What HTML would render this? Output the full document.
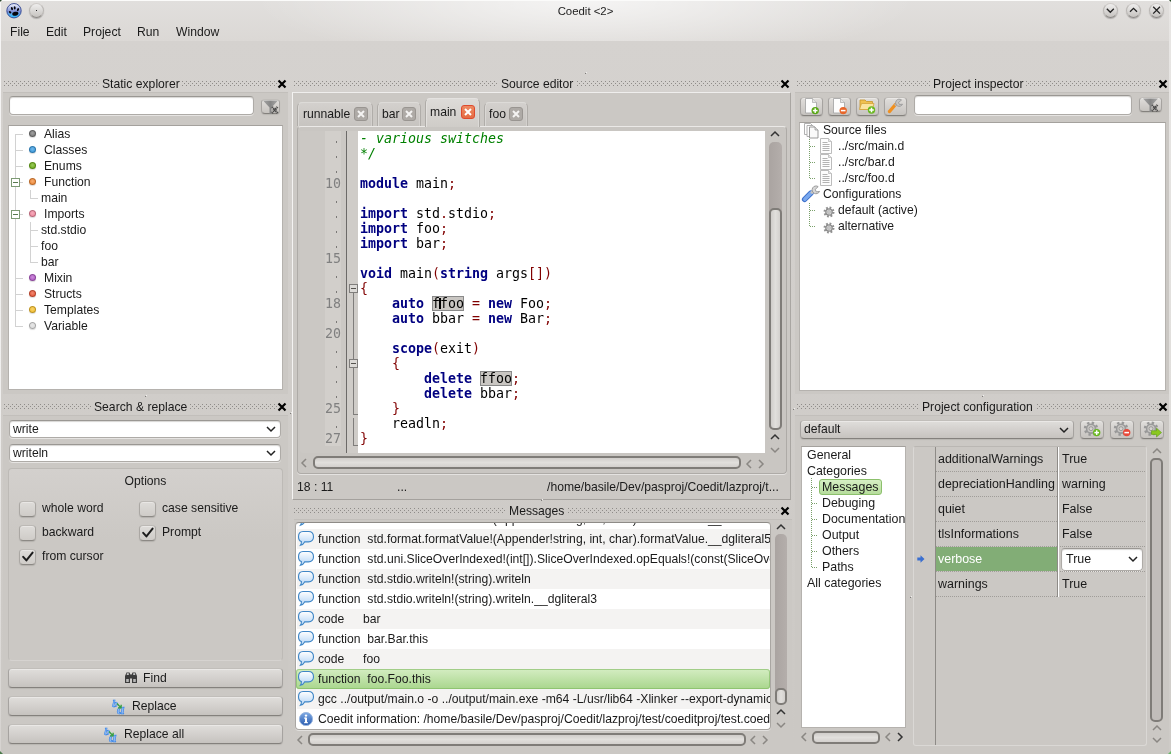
<!DOCTYPE html>
<html lang="en">
<head>
<meta charset="utf-8">
<title>Coedit</title>
<style>
*{box-sizing:border-box;margin:0;padding:0}
html,body{width:1171px;height:754px;overflow:hidden}
body{position:relative;background:linear-gradient(#d5d2cf 40px,#cbc8c4 740px);font-family:"Liberation Sans",Arial,sans-serif;font-size:12.16px;color:#1a1a1a;line-height:16px}
#wrap{position:absolute;left:0;top:0;width:1171px;height:754px;will-change:transform}
.abs{position:absolute}
.t{position:absolute;white-space:nowrap;line-height:16px;height:16px}
#top{left:0;top:0;width:1171px;height:41px;background:radial-gradient(ellipse 330px 64px at 585px 0,rgba(255,255,255,.66),rgba(255,255,255,0)),linear-gradient(#e1dfdd,#dbd8d5);border-top:1px solid #fbfbfa}
.wbtn{position:absolute;width:15px;height:15px;border-radius:50%;background:linear-gradient(#efeeed,#c6c3c0);border:1px solid #bab7b4;border-top-color:#cfccc9;border-bottom-color:#8c8986;box-shadow:0 1px 1px rgba(0,0,0,.22)}
.hdr{position:absolute;height:16px}
.dots{position:absolute;height:5px;
 background:linear-gradient(90deg,#8f8c89 1px,transparent 1px) 0 0/4px 1px repeat-x,linear-gradient(90deg,#8f8c89 1px,transparent 1px) 2px 2px/4px 1px repeat-x,linear-gradient(90deg,#8f8c89 1px,transparent 1px) 0 4px/4px 1px repeat-x}
.panel{position:absolute;background:#cbc8c4;border-top:1px solid #c2bfbb}
.white{position:absolute;background:#fff;border:1px solid #b5b2ae;border-top-color:#a4a19d}
.edit{position:absolute;background:#fff;border:1px solid #aeaba7;border-top-color:#9a9793;border-radius:4px;box-shadow:0 1px 0 #e6e4e2, inset 0 1px 1px #d8d6d4}
.btn{position:absolute;border:1px solid #a6a3a0;border-top-color:#c1beba;border-bottom-color:#84817d;border-radius:4px;background:linear-gradient(#e0dedb,#d3d0cd 50%,#c6c3bf);box-shadow:0 1px 1px #b9b6b2, inset 0 1px 0 #eae8e6}
.tl{position:absolute;background:#d2d2d2}
.dot{position:absolute;width:7px;height:7px;border-radius:50%}
.exp{position:absolute;width:9px;height:9px;border:1px solid #7d9a74;background:#fff}
.exp:after{content:"";position:absolute;left:1px;top:3px;width:5px;height:1px;background:#587a50}
.cb{position:absolute;width:17px;height:16px;border:1px solid #aaa7a3;border-top-color:#bcb9b5;border-bottom-color:#8c8985;border-radius:4px;background:linear-gradient(#dedcd9,#cfccc8);box-shadow:0 1px 1px #b4b1ad, inset 0 1px 0 #e9e7e5}
.sb{position:absolute;border:2px solid #7f7c78;border-radius:5px;background:linear-gradient(90deg,#d0cdca,#e1dfdc 50%,#d3d0cd)}
.sbh{position:absolute;border:2px solid #7f7c78;border-radius:5px;background:linear-gradient(#d0cdca,#e1dfdc 50%,#d3d0cd)}
.trk{position:absolute;background:linear-gradient(90deg,#aaa4a1,#b4aeab);border-radius:5px}
.cl{position:absolute;left:360px;white-space:pre;line-height:15px;height:15px;font-family:"DejaVu Sans Mono","Liberation Mono",monospace;font-size:13.29px;color:#000}
.kw{color:#000080;font-weight:bold}
.sy{color:#800000}
.cm{color:#008000;font-style:italic}
.ln{position:absolute;left:299px;width:42px;text-align:right;line-height:15px;height:15px;font-family:"DejaVu Sans Mono","Liberation Mono",monospace;font-size:13.29px;color:#808080}
.hl{background:#c9c6c2;box-shadow:inset 0 0 0 1px #8a8a8a}
.msg{position:absolute;left:297px;width:473px;height:20px;line-height:20px;white-space:pre;overflow:hidden}
.msg.alt{background:#f4f3f2}
.msg .tx{position:absolute;left:21px;top:0}
.gl{position:absolute}
</style>
</head>
<body>
<div id="wrap">
<div id="top" class="abs"></div>
<div class="abs" style="left:0;top:0;width:1px;height:754px;background:linear-gradient(#f6f5f5,#efeeed 400px,#d6d3d0 740px)"></div>
<div class="abs" style="left:0;top:0;width:0;height:0;border-top:2px solid #2c4a2c;border-right:2px solid transparent"></div>
<div class="abs" style="left:1169px;top:0;width:2px;height:754px;background:linear-gradient(#e8e6e4,#e0dedb 400px,#cecbc7 740px)"></div>
<div class="abs" style="left:0;bottom:0;width:0;height:0;border-bottom:3px solid #4a7a4a;border-right:3px solid transparent"></div>
<div class="abs" style="right:0;bottom:0;width:0;height:0;border-bottom:3px solid #6ab86a;border-left:3px solid transparent"></div>
<div class="abs" style="right:0;top:0;width:0;height:0;border-top:2px solid #2c4a2c;border-left:2px solid transparent"></div>
<svg class="abs" style="left:6px;top:3px" width="16" height="16" viewBox="0 0 18 18">
 <defs><linearGradient id="pawg" x1="0" y1="0" x2="0" y2="1"><stop offset="0" stop-color="#f6f8fd"/><stop offset="0.22" stop-color="#c4cdee"/><stop offset="0.55" stop-color="#7f90d6"/><stop offset="0.85" stop-color="#3fb4f6"/><stop offset="1" stop-color="#35c0ff"/></linearGradient></defs>
 <circle cx="9" cy="8.7" r="8.1" fill="url(#pawg)" stroke="#2e418e" stroke-width="1"/>
 <ellipse cx="10.5" cy="12.1" rx="3.5" ry="2.2" transform="rotate(-14 10.5 12.1)" fill="#06060c"/>
 <ellipse cx="4.6" cy="10.3" rx="1.1" ry="1.6" transform="rotate(-50 4.6 10.3)" fill="#06060c"/>
 <ellipse cx="6.7" cy="6.3" rx="1.1" ry="1.8" transform="rotate(-20 6.7 6.3)" fill="#06060c"/>
 <ellipse cx="9.8" cy="5.4" rx="1.1" ry="1.8" transform="rotate(-5 9.8 5.4)" fill="#06060c"/>
 <ellipse cx="13.5" cy="7.5" rx="1.1" ry="1.8" transform="rotate(25 13.5 7.5)" fill="#06060c"/>
</svg>
<div class="wbtn" style="left:29px;top:3px"></div>
<div class="abs" style="left:36px;top:10px;width:1px;height:1px;background:#222"></div>
<div class="t" style="left:0;width:1171px;top:2.5px;text-align:center;color:#222;font-size:11.4px">Coedit &lt;2&gt;</div>
<div class="wbtn" style="left:1103px;top:3px"></div>
<div class="wbtn" style="left:1126px;top:3px"></div>
<div class="wbtn" style="left:1149px;top:3px"></div>
<svg class="abs" style="left:1102px;top:2px" width="64" height="18" viewBox="0 0 64 18" fill="none" stroke="#222" stroke-width="1.3" stroke-linecap="butt" stroke-linejoin="miter">
 <path d="M4.8 6.8 L8.3 10.3 L11.8 6.8"/><path d="M28 9.8 L31.5 6.3 L35 9.8"/><path d="M51.2 4.8 L58 11.6 M58 4.8 L51.2 11.6"/>
</svg>
<div class="t" style="left:10px;top:24px;">File</div>
<div class="t" style="left:46px;top:24px;">Edit</div>
<div class="t" style="left:83px;top:24px;">Project</div>
<div class="t" style="left:137px;top:24px;">Run</div>
<div class="t" style="left:176px;top:24px;">Window</div>
<div class="dots" style="left:4px;top:81px;width:95px"></div>
<div class="t" style="left:102px;top:76px;">Static explorer</div>
<div class="dots" style="left:182px;top:81px;width:95px"></div>
<svg class="abs" style="left:277px;top:79px" width="10" height="10" viewBox="0 0 10 10"><path d="M1.5 1.5 L8.5 8.5 M8.5 1.5 L1.5 8.5" stroke="#000" stroke-width="2.2" stroke-linecap="butt"/></svg>
<div class="panel" style="left:3px;top:92px;width:285px;height:302px"></div>
<div class="edit" style="left:9px;top:96px;width:245px;height:19px"></div>
<div class="btn" style="left:261px;top:99px;width:19px;height:15px;border-radius:4px"></div>
<svg class="abs" style="left:261px;top:99px" width="19" height="16" viewBox="0 0 19 16"><defs><linearGradient id="fg261" x1="0" y1="0" x2="1" y2="0"><stop offset="0" stop-color="#a4a4a4"/><stop offset="0.5" stop-color="#868686"/><stop offset="1" stop-color="#a8a8a8"/></linearGradient></defs><path d="M2.0 1.5 H17.0 L10.5 8.5 V15 H8.5 V8.5 Z" fill="url(#fg261)"/><path d="M11.0 8 L16.5 14 M16.5 8 L11.0 14" stroke="#444" stroke-width="2.2" stroke-dasharray="1.1 0.7"/></svg>
<div class="white" style="left:8px;top:125px;width:275px;height:265px"></div>
<div class="tl" style="left:15px;top:134px;width:1px;height:193px"></div>
<div class="tl" style="left:16px;top:134px;width:7px;height:1px"></div>
<div class="dot" style="left:29px;top:130px;background:radial-gradient(circle at 50% 45%,rgba(255,255,255,.3),rgba(255,255,255,0) 60%),#7a7a7a;box-shadow:inset 0 0 0 1px rgba(0,0,0,.25),0 1px 1px rgba(0,0,0,.15)"></div>
<div class="t" style="left:44px;top:126px;">Alias</div>
<div class="tl" style="left:16px;top:150px;width:7px;height:1px"></div>
<div class="dot" style="left:29px;top:146px;background:radial-gradient(circle at 50% 45%,rgba(255,255,255,.3),rgba(255,255,255,0) 60%),#3a9ade;box-shadow:inset 0 0 0 1px rgba(0,0,0,.25),0 1px 1px rgba(0,0,0,.15)"></div>
<div class="t" style="left:44px;top:142px;">Classes</div>
<div class="tl" style="left:16px;top:166px;width:7px;height:1px"></div>
<div class="dot" style="left:29px;top:162px;background:radial-gradient(circle at 50% 45%,rgba(255,255,255,.3),rgba(255,255,255,0) 60%),#6fb01c;box-shadow:inset 0 0 0 1px rgba(0,0,0,.25),0 1px 1px rgba(0,0,0,.15)"></div>
<div class="t" style="left:44px;top:158px;">Enums</div>
<div class="tl" style="left:16px;top:182px;width:7px;height:1px"></div>
<div class="dot" style="left:29px;top:178px;background:radial-gradient(circle at 50% 45%,rgba(255,255,255,.3),rgba(255,255,255,0) 60%),#f08a38;box-shadow:inset 0 0 0 1px rgba(0,0,0,.25),0 1px 1px rgba(0,0,0,.15)"></div>
<div class="t" style="left:44px;top:174px;">Function</div>
<div class="exp" style="left:11px;top:178px"></div>
<div class="t" style="left:41px;top:190px;">main</div>
<div class="tl" style="left:16px;top:214px;width:7px;height:1px"></div>
<div class="dot" style="left:29px;top:210px;background:radial-gradient(circle at 50% 45%,rgba(255,255,255,.3),rgba(255,255,255,0) 60%),#f08aa0;box-shadow:inset 0 0 0 1px rgba(0,0,0,.25),0 1px 1px rgba(0,0,0,.15)"></div>
<div class="t" style="left:44px;top:206px;">Imports</div>
<div class="exp" style="left:11px;top:210px"></div>
<div class="t" style="left:41px;top:222px;">std.stdio</div>
<div class="t" style="left:41px;top:238px;">foo</div>
<div class="t" style="left:41px;top:254px;">bar</div>
<div class="tl" style="left:16px;top:278px;width:7px;height:1px"></div>
<div class="dot" style="left:29px;top:274px;background:radial-gradient(circle at 50% 45%,rgba(255,255,255,.3),rgba(255,255,255,0) 60%),#b45cc8;box-shadow:inset 0 0 0 1px rgba(0,0,0,.25),0 1px 1px rgba(0,0,0,.15)"></div>
<div class="t" style="left:44px;top:270px;">Mixin</div>
<div class="tl" style="left:16px;top:294px;width:7px;height:1px"></div>
<div class="dot" style="left:29px;top:290px;background:radial-gradient(circle at 50% 45%,rgba(255,255,255,.3),rgba(255,255,255,0) 60%),#e8583a;box-shadow:inset 0 0 0 1px rgba(0,0,0,.25),0 1px 1px rgba(0,0,0,.15)"></div>
<div class="t" style="left:44px;top:286px;">Structs</div>
<div class="tl" style="left:16px;top:310px;width:7px;height:1px"></div>
<div class="dot" style="left:29px;top:306px;background:radial-gradient(circle at 50% 45%,rgba(255,255,255,.3),rgba(255,255,255,0) 60%),#f5c030;box-shadow:inset 0 0 0 1px rgba(0,0,0,.25),0 1px 1px rgba(0,0,0,.15)"></div>
<div class="t" style="left:44px;top:302px;">Templates</div>
<div class="tl" style="left:16px;top:326px;width:7px;height:1px"></div>
<div class="dot" style="left:29px;top:322px;background:radial-gradient(circle at 50% 45%,rgba(255,255,255,.3),rgba(255,255,255,0) 60%),#dcdcdc;box-shadow:inset 0 0 0 1px rgba(0,0,0,.25),0 1px 1px rgba(0,0,0,.15)"></div>
<div class="t" style="left:44px;top:318px;">Variable</div>
<div class="tl" style="left:30px;top:190px;width:1px;height:9px"></div><div class="tl" style="left:30px;top:198px;width:8px;height:1px"></div>
<div class="tl" style="left:30px;top:222px;width:1px;height:41px"></div>
<div class="tl" style="left:30px;top:230px;width:8px;height:1px"></div>
<div class="tl" style="left:30px;top:246px;width:8px;height:1px"></div>
<div class="tl" style="left:30px;top:262px;width:8px;height:1px"></div>
<div class="dots" style="left:4px;top:404px;width:87px"></div>
<div class="t" style="left:94px;top:399px;">Search &amp; replace</div>
<div class="dots" style="left:190px;top:404px;width:87px"></div>
<svg class="abs" style="left:277px;top:402px" width="10" height="10" viewBox="0 0 10 10"><path d="M1.5 1.5 L8.5 8.5 M8.5 1.5 L1.5 8.5" stroke="#000" stroke-width="2.2" stroke-linecap="butt"/></svg>
<div class="panel" style="left:3px;top:415px;width:285px;height:336px"></div>
<div class="edit" style="left:9px;top:420px;width:272px;height:18px"></div>
<div class="t" style="left:13px;top:421px;">write</div>
<svg class="abs" style="left:266px;top:426px" width="10" height="7" viewBox="0 0 10 7"><path d="M1 1 L5 5 L9 1" fill="none" stroke="#222" stroke-width="1.5"/></svg>
<div class="edit" style="left:9px;top:444px;width:272px;height:18px"></div>
<div class="t" style="left:13px;top:445px;">writeln</div>
<svg class="abs" style="left:266px;top:450px" width="10" height="7" viewBox="0 0 10 7"><path d="M1 1 L5 5 L9 1" fill="none" stroke="#222" stroke-width="1.5"/></svg>
<div class="abs" style="left:8px;top:468px;width:275px;height:193px;border:1px solid #bdbab6;border-bottom-color:#d6d3d0;border-radius:4px;background:linear-gradient(#d3d0cd,#cbc8c4 70px)"></div>
<div class="t" style="left:8px;top:473px;width:275px;text-align:center">Options</div>
<div class="cb" style="left:19px;top:501px"></div>
<div class="t" style="left:42px;top:500px;">whole word</div>
<div class="cb" style="left:139px;top:501px"></div>
<div class="t" style="left:162px;top:500px;">case sensitive</div>
<div class="cb" style="left:19px;top:525px"></div>
<div class="t" style="left:42px;top:524px;">backward</div>
<div class="cb" style="left:139px;top:525px"></div>
<svg class="abs" style="left:141px;top:526px" width="14" height="14" viewBox="0 0 14 14"><path d="M2.2 6.8 L5.4 10.4 L11.6 2.6" fill="none" stroke="#1c1c1c" stroke-width="2" stroke-linecap="round" stroke-linejoin="round"/></svg>
<div class="t" style="left:162px;top:524px;">Prompt</div>
<div class="cb" style="left:19px;top:549px"></div>
<svg class="abs" style="left:21px;top:550px" width="14" height="14" viewBox="0 0 14 14"><path d="M2.2 6.8 L5.4 10.4 L11.6 2.6" fill="none" stroke="#1c1c1c" stroke-width="2" stroke-linecap="round" stroke-linejoin="round"/></svg>
<div class="t" style="left:42px;top:548px;">from cursor</div>
<div class="btn" style="left:8px;top:668px;width:275px;height:20px"></div>
<div class="t" style="left:143px;top:670px;">Find</div>
<div class="btn" style="left:8px;top:696px;width:275px;height:20px"></div>
<div class="t" style="left:132px;top:698px;">Replace</div>
<div class="btn" style="left:8px;top:724px;width:275px;height:20px"></div>
<div class="t" style="left:124px;top:726px;">Replace all</div>
<svg class="abs" style="left:124px;top:671px" width="14" height="13" viewBox="0 0 14 13"><path d="M1 5 l1.5-3.5 h3 l0.8 2 h1.4 l0.8-2 h3 L13 5 V12 H8 V7.5 H6 V12 H1 Z" fill="#3c3c3c"/><rect x="2.2" y="8" width="2.6" height="3" fill="#b8b8b8"/><rect x="9.2" y="8" width="2.6" height="3" fill="#b8b8b8"/><rect x="2.8" y="2.3" width="2" height="1.6" fill="#d8d8d8"/><rect x="9.2" y="2.3" width="2" height="1.6" fill="#d8d8d8"/></svg>
<svg class="abs" style="left:112px;top:698px" width="17" height="17" viewBox="0 0 17 17"><text x="0.3" y="8.5" style="font:italic bold 11px Liberation Serif,serif" fill="#8fbcf6" stroke="#2f7fe8" stroke-width="0.5">b</text><text x="5" y="16" style="font:italic bold 15px Liberation Serif,serif" fill="#8fbcf6" stroke="#2f7fe8" stroke-width="0.6">a</text><path d="M5 5.5 L8.6 9.4 M9.2 6.8 L9 9.8 L6 9.9" fill="none" stroke="#3aa040" stroke-width="1.4"/></svg>
<svg class="abs" style="left:104px;top:726px" width="17" height="17" viewBox="0 0 17 17"><text x="0.3" y="8.5" style="font:italic bold 11px Liberation Serif,serif" fill="#8fbcf6" stroke="#2f7fe8" stroke-width="0.5">b</text><text x="5" y="16" style="font:italic bold 15px Liberation Serif,serif" fill="#8fbcf6" stroke="#2f7fe8" stroke-width="0.6">a</text><path d="M5 5.5 L8.6 9.4 M9.2 6.8 L9 9.8 L6 9.9" fill="none" stroke="#3aa040" stroke-width="1.4"/></svg>
<div class="dots" style="left:294px;top:81px;width:204px"></div>
<div class="t" style="left:501px;top:76px;">Source editor</div>
<div class="dots" style="left:577px;top:81px;width:203px"></div>
<svg class="abs" style="left:780px;top:79px" width="10" height="10" viewBox="0 0 10 10"><path d="M1.5 1.5 L8.5 8.5 M8.5 1.5 L1.5 8.5" stroke="#000" stroke-width="2.2" stroke-linecap="butt"/></svg>
<div class="abs" style="left:292px;top:92px;width:499px;height:408px;background:#cbc8c4;border:1px solid #a9a6a2;border-top-color:#efeeed;border-left-color:#f4f3f2;border-bottom-color:#a4a19d"></div>
<div class="abs" style="left:297px;top:102px;width:76px;height:24px;border:1px solid #b0ada9;border-top-color:#dddbd8;border-bottom:none;border-radius:5px 5px 0 0;background:linear-gradient(#d3d0cd,#c7c4c0);box-shadow:inset 1px 0 0 #dad8d5,inset -1px 0 0 #d4d1ce"></div>
<div class="t" style="left:303px;top:106px;">runnable</div>
<div class="abs" style="left:354px;top:107px;width:14px;height:14px;border-radius:3px;background:#aeaaa6;border:1px solid #999591"></div>
<svg class="abs" style="left:357px;top:110px" width="8" height="8" viewBox="0 0 8 8"><path d="M1 1 L7 7 M7 1 L1 7" stroke="#f4f3f2" stroke-width="2"/></svg>
<div class="abs" style="left:377px;top:102px;width:44px;height:24px;border:1px solid #b0ada9;border-top-color:#dddbd8;border-bottom:none;border-radius:5px 5px 0 0;background:linear-gradient(#d3d0cd,#c7c4c0);box-shadow:inset 1px 0 0 #dad8d5,inset -1px 0 0 #d4d1ce"></div>
<div class="t" style="left:382px;top:106px;">bar</div>
<div class="abs" style="left:402px;top:107px;width:14px;height:14px;border-radius:3px;background:#aeaaa6;border:1px solid #999591"></div>
<svg class="abs" style="left:405px;top:110px" width="8" height="8" viewBox="0 0 8 8"><path d="M1 1 L7 7 M7 1 L1 7" stroke="#f4f3f2" stroke-width="2"/></svg>
<div class="abs" style="left:484px;top:102px;width:44px;height:24px;border:1px solid #b0ada9;border-top-color:#dddbd8;border-bottom:none;border-radius:5px 5px 0 0;background:linear-gradient(#d3d0cd,#c7c4c0);box-shadow:inset 1px 0 0 #dad8d5,inset -1px 0 0 #d4d1ce"></div>
<div class="t" style="left:489px;top:106px;">foo</div>
<div class="abs" style="left:509px;top:107px;width:14px;height:14px;border-radius:3px;background:#aeaaa6;border:1px solid #999591"></div>
<svg class="abs" style="left:512px;top:110px" width="8" height="8" viewBox="0 0 8 8"><path d="M1 1 L7 7 M7 1 L1 7" stroke="#f4f3f2" stroke-width="2"/></svg>
<div class="abs" style="left:297px;top:126px;width:490px;height:348px;border:1px solid #aeaba7;border-top-color:#ebe9e7;border-radius:4px;background:#c9c6c2;box-shadow:0 1px 0 #e4e2e0"></div>
<div class="abs" style="left:425px;top:98px;width:55px;height:29px;border:1px solid #aeaba7;border-top-color:#e4e2e0;border-bottom:none;border-radius:5px 5px 0 0;background:linear-gradient(#dddbd8,#cfccc8);box-shadow:inset 1px 0 0 #e2e0dd,inset -1px 0 0 #dcdad7"></div>
<div class="t" style="left:430px;top:104px;">main</div>
<div class="abs" style="left:461px;top:105px;width:14px;height:14px;border-radius:3px;background:linear-gradient(#ee8a62,#e46c44);border:1px solid #de4a2e"></div>
<svg class="abs" style="left:464px;top:108px" width="8" height="8" viewBox="0 0 8 8"><path d="M1 1 L7 7 M7 1 L1 7" stroke="#fff" stroke-width="2"/></svg>
<div class="abs" style="left:300px;top:131px;width:46px;height:322px;background:#cbc8c4;border-radius:0 0 0 3px"></div>
<div class="abs" style="left:325px;top:131px;width:16px;height:315px;background:#d2cfcb"></div>
<div class="abs" style="left:347px;top:131px;width:11px;height:322px;background:#cfccc8"></div>
<div class="abs" style="left:346px;top:131px;width:1px;height:322px;background:#6c6a68"></div>
<div class="abs" style="left:358px;top:131px;width:407px;height:322px;background:#fff"></div>
<div class="abs" style="left:336px;top:141px;width:1px;height:2px;background:#7a7876"></div>
<div class="cl" style="top:131px"><span class="cm">- various switches</span></div>
<div class="abs" style="left:336px;top:156px;width:1px;height:2px;background:#7a7876"></div>
<div class="cl" style="top:146px"><span class="cm">*/</span></div>
<div class="abs" style="left:336px;top:171px;width:1px;height:2px;background:#7a7876"></div>
<div class="ln" style="top:176px">10</div>
<div class="cl" style="top:176px"><span class="kw">module</span> main<span class="sy">;</span></div>
<div class="abs" style="left:336px;top:201px;width:1px;height:2px;background:#7a7876"></div>
<div class="abs" style="left:336px;top:216px;width:1px;height:2px;background:#7a7876"></div>
<div class="cl" style="top:206px"><span class="kw">import</span> std<span class="sy">.</span>stdio<span class="sy">;</span></div>
<div class="abs" style="left:336px;top:231px;width:1px;height:2px;background:#7a7876"></div>
<div class="cl" style="top:221px"><span class="kw">import</span> foo<span class="sy">;</span></div>
<div class="abs" style="left:336px;top:246px;width:1px;height:2px;background:#7a7876"></div>
<div class="cl" style="top:236px"><span class="kw">import</span> bar<span class="sy">;</span></div>
<div class="ln" style="top:251px">15</div>
<div class="abs" style="left:336px;top:276px;width:1px;height:2px;background:#7a7876"></div>
<div class="cl" style="top:266px"><span class="kw">void</span> main<span class="sy">(</span><span class="kw">string</span> args<span class="sy">[])</span></div>
<div class="abs" style="left:336px;top:291px;width:1px;height:2px;background:#7a7876"></div>
<div class="cl" style="top:281px"><span class="sy">{</span></div>
<div class="ln" style="top:296px">18</div>
<div class="cl" style="top:296px">    <span class="kw">auto</span> <span class="hl">ffoo</span> <span class="sy">=</span> <span class="kw">new</span> Foo<span class="sy">;</span></div>
<div class="abs" style="left:336px;top:321px;width:1px;height:2px;background:#7a7876"></div>
<div class="cl" style="top:311px">    <span class="kw">auto</span> bbar <span class="sy">=</span> <span class="kw">new</span> Bar<span class="sy">;</span></div>
<div class="ln" style="top:326px">20</div>
<div class="abs" style="left:336px;top:351px;width:1px;height:2px;background:#7a7876"></div>
<div class="cl" style="top:341px">    <span class="kw">scope</span><span class="sy">(</span>exit<span class="sy">)</span></div>
<div class="abs" style="left:336px;top:366px;width:1px;height:2px;background:#7a7876"></div>
<div class="cl" style="top:356px">    <span class="sy">{</span></div>
<div class="abs" style="left:336px;top:381px;width:1px;height:2px;background:#7a7876"></div>
<div class="cl" style="top:371px">        <span class="kw">delete</span> <span class="hl">ffoo</span><span class="sy">;</span></div>
<div class="abs" style="left:336px;top:396px;width:1px;height:2px;background:#7a7876"></div>
<div class="cl" style="top:386px">        <span class="kw">delete</span> bbar<span class="sy">;</span></div>
<div class="ln" style="top:401px">25</div>
<div class="cl" style="top:401px">    <span class="sy">}</span></div>
<div class="abs" style="left:336px;top:426px;width:1px;height:2px;background:#7a7876"></div>
<div class="cl" style="top:416px">    readln<span class="sy">;</span></div>
<div class="ln" style="top:431px">27</div>
<div class="cl" style="top:431px"><span class="sy">}</span></div>
<div class="abs" style="left:439px;top:298px;width:2px;height:11px;background:#000"></div>
<div class="abs" style="left:353px;top:293px;width:1px;height:66px;background:#7f7d7b"></div>
<div class="abs" style="left:353px;top:368px;width:1px;height:47px;background:#7f7d7b"></div>
<div class="abs" style="left:353px;top:414px;width:5px;height:1px;background:#7f7d7b"></div>
<div class="abs" style="left:353px;top:418px;width:1px;height:28px;background:#7f7d7b"></div>
<div class="abs" style="left:353px;top:445px;width:5px;height:1px;background:#7f7d7b"></div>
<div class="abs" style="left:349px;top:284px;width:9px;height:9px;border:1px solid #7f7d7b;background:#dcdad7"></div><div class="abs" style="left:351px;top:288px;width:5px;height:1px;background:#55534f"></div>
<div class="abs" style="left:349px;top:359px;width:9px;height:9px;border:1px solid #7f7d7b;background:#dcdad7"></div><div class="abs" style="left:351px;top:363px;width:5px;height:1px;background:#55534f"></div>
<svg class="abs" style="left:770px;top:130px" width="10" height="10" viewBox="0 0 10 10"><path d="M1 6 L5 2 L9 6" fill="none" stroke="#333" stroke-width="1.5"/></svg>
<div class="trk" style="left:769px;top:142px;width:13px;height:288px"></div>
<div class="sb" style="left:769px;top:208px;width:13px;height:222px"></div>
<svg class="abs" style="left:770px;top:433px" width="10" height="10" viewBox="0 0 10 10"><path d="M1 6 L5 2 L9 6" fill="none" stroke="#333" stroke-width="1.5"/></svg>
<svg class="abs" style="left:770px;top:446px" width="10" height="10" viewBox="0 0 10 10"><path d="M1 2 L5 6 L9 2" fill="none" stroke="#8a8783" stroke-width="1.5"/></svg>
<svg class="abs" style="left:300px;top:458px" width="10" height="10" viewBox="0 0 10 10"><path d="M6 1 L2 5 L6 9" fill="none" stroke="#8a8783" stroke-width="1.5"/></svg>
<div class="sbh" style="left:313px;top:456px;width:428px;height:13px"></div>
<svg class="abs" style="left:745px;top:459px" width="10" height="10" viewBox="0 0 10 10"><path d="M6 1 L2 5 L6 9" fill="none" stroke="#8a8783" stroke-width="1.5"/></svg>
<svg class="abs" style="left:757px;top:459px" width="10" height="10" viewBox="0 0 10 10"><path d="M2 1 L6 5 L2 9" fill="none" stroke="#8a8783" stroke-width="1.5"/></svg>
<div class="t" style="left:297px;top:479px;">18 : 11</div>
<div class="t" style="left:397px;top:479px;">...</div>
<div class="t" style="left:547px;top:479px;">/home/basile/Dev/pasproj/Coedit/lazproj/t...</div>
<div class="dots" style="left:294px;top:508px;width:212px"></div>
<div class="t" style="left:509px;top:503px;">Messages</div>
<div class="dots" style="left:568px;top:508px;width:212px"></div>
<svg class="abs" style="left:780px;top:506px" width="10" height="10" viewBox="0 0 10 10"><path d="M1.5 1.5 L8.5 8.5 M8.5 1.5 L1.5 8.5" stroke="#000" stroke-width="2.2" stroke-linecap="butt"/></svg>
<div class="panel" style="left:294px;top:519px;width:498px;height:232px"></div>
<div class="abs" style="left:295px;top:522px;width:476px;height:208px;background:#fff;border:1px solid #a9a6a2;border-top-color:#8e8b87;border-radius:4px;box-shadow:0 1px 0 #e2e0de"></div>
<div class="msg" style="top:523px;height:6px"><div class="abs" style="left:0;top:-14px;width:473px;height:20px"><span class="tx">function  std.format.formatValue!(Appender!string, int, char).formatValue.__lambda</span><svg class="abs" style="left:0px;top:1px" width="18" height="17" viewBox="0 0 18 17"><defs><linearGradient id="bg99" x1="0" y1="0" x2="0" y2="1"><stop offset="0" stop-color="#ffffff"/><stop offset="0.75" stop-color="#c4def8"/></linearGradient></defs><path d="M6 1.5 H11.5 C14.8 1.5 16.5 3.6 16.5 6.7 C16.5 9.8 14.8 11.9 11.5 11.9 H7.6 C6.8 13.6 5.3 14.8 3.4 15.3 C4.2 14.2 4.5 13 4.4 11.6 C2.4 10.9 1.5 9.2 1.5 6.7 C1.5 3.6 3 1.5 6 1.5 Z" fill="url(#bg99)" stroke="#3f86c6" stroke-width="1.1"/></svg></div></div>
<div class="msg alt" style="top:529px;"><svg class="abs" style="left:0px;top:1px" width="18" height="17" viewBox="0 0 18 17"><defs><linearGradient id="bg0" x1="0" y1="0" x2="0" y2="1"><stop offset="0" stop-color="#ffffff"/><stop offset="0.75" stop-color="#c4def8"/></linearGradient></defs><path d="M6 1.5 H11.5 C14.8 1.5 16.5 3.6 16.5 6.7 C16.5 9.8 14.8 11.9 11.5 11.9 H7.6 C6.8 13.6 5.3 14.8 3.4 15.3 C4.2 14.2 4.5 13 4.4 11.6 C2.4 10.9 1.5 9.2 1.5 6.7 C1.5 3.6 3 1.5 6 1.5 Z" fill="url(#bg0)" stroke="#3f86c6" stroke-width="1.1"/></svg><span class="tx">function  std.format.formatValue!(Appender!string, int, char).formatValue.__dgliteral5</span></div>
<div class="msg" style="top:549px;"><svg class="abs" style="left:0px;top:1px" width="18" height="17" viewBox="0 0 18 17"><defs><linearGradient id="bg1" x1="0" y1="0" x2="0" y2="1"><stop offset="0" stop-color="#ffffff"/><stop offset="0.75" stop-color="#c4def8"/></linearGradient></defs><path d="M6 1.5 H11.5 C14.8 1.5 16.5 3.6 16.5 6.7 C16.5 9.8 14.8 11.9 11.5 11.9 H7.6 C6.8 13.6 5.3 14.8 3.4 15.3 C4.2 14.2 4.5 13 4.4 11.6 C2.4 10.9 1.5 9.2 1.5 6.7 C1.5 3.6 3 1.5 6 1.5 Z" fill="url(#bg1)" stroke="#3f86c6" stroke-width="1.1"/></svg><span class="tx">function  std.uni.SliceOverIndexed!(int[]).SliceOverIndexed.opEquals!(const(SliceOverIndexed!(int[])))</span></div>
<div class="msg alt" style="top:569px;"><svg class="abs" style="left:0px;top:1px" width="18" height="17" viewBox="0 0 18 17"><defs><linearGradient id="bg2" x1="0" y1="0" x2="0" y2="1"><stop offset="0" stop-color="#ffffff"/><stop offset="0.75" stop-color="#c4def8"/></linearGradient></defs><path d="M6 1.5 H11.5 C14.8 1.5 16.5 3.6 16.5 6.7 C16.5 9.8 14.8 11.9 11.5 11.9 H7.6 C6.8 13.6 5.3 14.8 3.4 15.3 C4.2 14.2 4.5 13 4.4 11.6 C2.4 10.9 1.5 9.2 1.5 6.7 C1.5 3.6 3 1.5 6 1.5 Z" fill="url(#bg2)" stroke="#3f86c6" stroke-width="1.1"/></svg><span class="tx">function  std.stdio.writeln!(string).writeln</span></div>
<div class="msg" style="top:589px;"><svg class="abs" style="left:0px;top:1px" width="18" height="17" viewBox="0 0 18 17"><defs><linearGradient id="bg3" x1="0" y1="0" x2="0" y2="1"><stop offset="0" stop-color="#ffffff"/><stop offset="0.75" stop-color="#c4def8"/></linearGradient></defs><path d="M6 1.5 H11.5 C14.8 1.5 16.5 3.6 16.5 6.7 C16.5 9.8 14.8 11.9 11.5 11.9 H7.6 C6.8 13.6 5.3 14.8 3.4 15.3 C4.2 14.2 4.5 13 4.4 11.6 C2.4 10.9 1.5 9.2 1.5 6.7 C1.5 3.6 3 1.5 6 1.5 Z" fill="url(#bg3)" stroke="#3f86c6" stroke-width="1.1"/></svg><span class="tx">function  std.stdio.writeln!(string).writeln.__dgliteral3</span></div>
<div class="msg alt" style="top:609px;"><svg class="abs" style="left:0px;top:1px" width="18" height="17" viewBox="0 0 18 17"><defs><linearGradient id="bg4" x1="0" y1="0" x2="0" y2="1"><stop offset="0" stop-color="#ffffff"/><stop offset="0.75" stop-color="#c4def8"/></linearGradient></defs><path d="M6 1.5 H11.5 C14.8 1.5 16.5 3.6 16.5 6.7 C16.5 9.8 14.8 11.9 11.5 11.9 H7.6 C6.8 13.6 5.3 14.8 3.4 15.3 C4.2 14.2 4.5 13 4.4 11.6 C2.4 10.9 1.5 9.2 1.5 6.7 C1.5 3.6 3 1.5 6 1.5 Z" fill="url(#bg4)" stroke="#3f86c6" stroke-width="1.1"/></svg><span class="tx"><span style="display:inline-block;width:45px">code</span>bar</span></div>
<div class="msg" style="top:629px;"><svg class="abs" style="left:0px;top:1px" width="18" height="17" viewBox="0 0 18 17"><defs><linearGradient id="bg5" x1="0" y1="0" x2="0" y2="1"><stop offset="0" stop-color="#ffffff"/><stop offset="0.75" stop-color="#c4def8"/></linearGradient></defs><path d="M6 1.5 H11.5 C14.8 1.5 16.5 3.6 16.5 6.7 C16.5 9.8 14.8 11.9 11.5 11.9 H7.6 C6.8 13.6 5.3 14.8 3.4 15.3 C4.2 14.2 4.5 13 4.4 11.6 C2.4 10.9 1.5 9.2 1.5 6.7 C1.5 3.6 3 1.5 6 1.5 Z" fill="url(#bg5)" stroke="#3f86c6" stroke-width="1.1"/></svg><span class="tx">function  bar.Bar.this</span></div>
<div class="msg alt" style="top:649px;"><svg class="abs" style="left:0px;top:1px" width="18" height="17" viewBox="0 0 18 17"><defs><linearGradient id="bg6" x1="0" y1="0" x2="0" y2="1"><stop offset="0" stop-color="#ffffff"/><stop offset="0.75" stop-color="#c4def8"/></linearGradient></defs><path d="M6 1.5 H11.5 C14.8 1.5 16.5 3.6 16.5 6.7 C16.5 9.8 14.8 11.9 11.5 11.9 H7.6 C6.8 13.6 5.3 14.8 3.4 15.3 C4.2 14.2 4.5 13 4.4 11.6 C2.4 10.9 1.5 9.2 1.5 6.7 C1.5 3.6 3 1.5 6 1.5 Z" fill="url(#bg6)" stroke="#3f86c6" stroke-width="1.1"/></svg><span class="tx"><span style="display:inline-block;width:45px">code</span>foo</span></div>
<div class="abs" style="left:296px;top:669px;width:474px;height:19.5px;background:linear-gradient(#d4edc2,#a9d68d);box-shadow:inset 0 0 0 1px rgba(120,180,90,.55);border-radius:3px"></div>
<div class="msg" style="top:669px;"><svg class="abs" style="left:0px;top:1px" width="18" height="17" viewBox="0 0 18 17"><defs><linearGradient id="bg7" x1="0" y1="0" x2="0" y2="1"><stop offset="0" stop-color="#ffffff"/><stop offset="0.75" stop-color="#c4def8"/></linearGradient></defs><path d="M6 1.5 H11.5 C14.8 1.5 16.5 3.6 16.5 6.7 C16.5 9.8 14.8 11.9 11.5 11.9 H7.6 C6.8 13.6 5.3 14.8 3.4 15.3 C4.2 14.2 4.5 13 4.4 11.6 C2.4 10.9 1.5 9.2 1.5 6.7 C1.5 3.6 3 1.5 6 1.5 Z" fill="url(#bg7)" stroke="#3f86c6" stroke-width="1.1"/></svg><span class="tx">function  foo.Foo.this</span></div>
<div class="msg alt" style="top:689px;"><svg class="abs" style="left:0px;top:1px" width="18" height="17" viewBox="0 0 18 17"><defs><linearGradient id="bg8" x1="0" y1="0" x2="0" y2="1"><stop offset="0" stop-color="#ffffff"/><stop offset="0.75" stop-color="#c4def8"/></linearGradient></defs><path d="M6 1.5 H11.5 C14.8 1.5 16.5 3.6 16.5 6.7 C16.5 9.8 14.8 11.9 11.5 11.9 H7.6 C6.8 13.6 5.3 14.8 3.4 15.3 C4.2 14.2 4.5 13 4.4 11.6 C2.4 10.9 1.5 9.2 1.5 6.7 C1.5 3.6 3 1.5 6 1.5 Z" fill="url(#bg8)" stroke="#3f86c6" stroke-width="1.1"/></svg><span class="tx">gcc ../output/main.o -o ../output/main.exe -m64 -L/usr/lib64 -Xlinker --export-dynamic -l:libphobos2.a</span></div>
<div class="msg" style="top:709px;"><svg class="abs" style="left:1px;top:2px" width="16" height="16" viewBox="0 0 16 16"><defs><linearGradient id="ig" x1="0" y1="0" x2="0" y2="1"><stop offset="0" stop-color="#7eaae4"/><stop offset="1" stop-color="#2a5cb0"/></linearGradient></defs><circle cx="8" cy="8" r="6.6" fill="url(#ig)" stroke="#9cb8e0" stroke-width="1"/><circle cx="8" cy="4.6" r="1.2" fill="#fff"/><rect x="7" y="6.6" width="2" height="5.4" fill="#fff"/><rect x="6" y="6.6" width="2" height="1" fill="#fff"/><rect x="6" y="11.2" width="4" height="1" fill="#fff"/></svg><span class="tx">Coedit information: /home/basile/Dev/pasproj/Coedit/lazproj/test/coeditproj/test.coedit</span></div>
<svg class="abs" style="left:776px;top:523px" width="10" height="10" viewBox="0 0 10 10"><path d="M1 6 L5 2 L9 6" fill="none" stroke="#333" stroke-width="1.5"/></svg>
<div class="trk" style="left:775px;top:534px;width:12px;height:170px"></div>
<div class="sb" style="left:775px;top:688px;width:12px;height:17px"></div>
<svg class="abs" style="left:776px;top:708px" width="10" height="10" viewBox="0 0 10 10"><path d="M1 6 L5 2 L9 6" fill="none" stroke="#333" stroke-width="1.5"/></svg>
<svg class="abs" style="left:776px;top:721px" width="10" height="10" viewBox="0 0 10 10"><path d="M1 2 L5 6 L9 2" fill="none" stroke="#8a8783" stroke-width="1.5"/></svg>
<svg class="abs" style="left:296px;top:735px" width="10" height="10" viewBox="0 0 10 10"><path d="M6 1 L2 5 L6 9" fill="none" stroke="#8a8783" stroke-width="1.5"/></svg>
<div class="sbh" style="left:308px;top:733px;width:438px;height:13px"></div>
<svg class="abs" style="left:749px;top:735px" width="10" height="10" viewBox="0 0 10 10"><path d="M6 1 L2 5 L6 9" fill="none" stroke="#8a8783" stroke-width="1.5"/></svg>
<svg class="abs" style="left:761px;top:735px" width="10" height="10" viewBox="0 0 10 10"><path d="M2 1 L6 5 L2 9" fill="none" stroke="#8a8783" stroke-width="1.5"/></svg>
<div class="dots" style="left:797px;top:81px;width:133px"></div>
<div class="t" style="left:933px;top:76px;">Project inspector</div>
<div class="dots" style="left:1026px;top:81px;width:132px"></div>
<svg class="abs" style="left:1158px;top:79px" width="10" height="10" viewBox="0 0 10 10"><path d="M1.5 1.5 L8.5 8.5 M8.5 1.5 L1.5 8.5" stroke="#000" stroke-width="2.2" stroke-linecap="butt"/></svg>
<div class="panel" style="left:795px;top:92px;width:374px;height:302px"></div>
<div class="btn" style="left:800px;top:97px;width:23px;height:19px"></div>
<svg class="abs" style="left:800px;top:97px" width="23" height="19" viewBox="0 0 23 19"><path d="M5.5 1.5 h7 l4 4 v10.5 h-11 z" fill="#fdfdfd" stroke="#a8a8a8" stroke-width="0.9"/><path d="M12.5 1.5 v4 h4" fill="#e4e4e4" stroke="#a8a8a8" stroke-width="0.7"/><circle cx="15.2" cy="13.6" r="3.7" fill="#5aa818"/><rect x="12.899999999999999" y="12.85" width="4.6" height="1.5" fill="#fff"/><rect x="14.45" y="11.3" width="1.5" height="4.6" fill="#fff"/></svg>
<div class="btn" style="left:828px;top:97px;width:23px;height:19px"></div>
<svg class="abs" style="left:828px;top:97px" width="23" height="19" viewBox="0 0 23 19"><path d="M5.5 1.5 h7 l4 4 v10.5 h-11 z" fill="#fdfdfd" stroke="#a8a8a8" stroke-width="0.9"/><path d="M12.5 1.5 v4 h4" fill="#e4e4e4" stroke="#a8a8a8" stroke-width="0.7"/><circle cx="15.2" cy="13.6" r="3.7" fill="#e8662a"/><rect x="12.899999999999999" y="12.85" width="4.6" height="1.5" fill="#fff"/></svg>
<div class="btn" style="left:856px;top:97px;width:23px;height:19px"></div>
<svg class="abs" style="left:856px;top:97px" width="23" height="19" viewBox="0 0 23 19"><path d="M4 3 h5 l1.5 1.5 h6 v8 h-12.5 z" fill="#f0c050" stroke="#c8962c" stroke-width="0.8"/><path d="M3.5 12.5 l2-6 h12.5 l-1.7 6 z" fill="#fbe3a0" stroke="#d4a43c" stroke-width="0.8"/><circle cx="15.5" cy="13" r="3.7" fill="#6ab820"/><rect x="13.2" y="12.25" width="4.6" height="1.5" fill="#fff"/><rect x="14.75" y="10.7" width="1.5" height="4.6" fill="#fff"/></svg>
<div class="btn" style="left:884px;top:97px;width:23px;height:19px"></div>
<svg class="abs" style="left:884px;top:97px" width="23" height="19" viewBox="0 0 23 19"><path d="M5.5 14.5 L11.5 7.5" stroke="#f09020" stroke-width="3.4" stroke-linecap="round"/><path d="M11 8.5 L13 6.5" stroke="#b8b8b8" stroke-width="2.4"/><path d="M17.5 3 a3.6 3.6 0 1 0 1 4.2 l-3 0.3 l-1-2 z" fill="#c4c4c4" stroke="#8c8c8c" stroke-width="0.7"/></svg>
<div class="edit" style="left:914px;top:95px;width:218px;height:20px"></div>
<div class="btn" style="left:1139px;top:97px;width:23px;height:15px;border-radius:4px"></div>
<svg class="abs" style="left:1139px;top:97px" width="23" height="16" viewBox="0 0 23 16"><defs><linearGradient id="fg1139" x1="0" y1="0" x2="1" y2="0"><stop offset="0" stop-color="#a4a4a4"/><stop offset="0.5" stop-color="#868686"/><stop offset="1" stop-color="#a8a8a8"/></linearGradient></defs><path d="M4.0 1.5 H19.0 L12.5 8.5 V15 H10.5 V8.5 Z" fill="url(#fg1139)"/><path d="M13.0 8 L18.5 14 M18.5 8 L13.0 14" stroke="#444" stroke-width="2.2" stroke-dasharray="1.1 0.7"/></svg>
<div class="white" style="left:799px;top:122px;width:367px;height:269px"></div>
<svg class="abs" style="left:803px;top:122px" width="18" height="17" viewBox="0 0 18 17"><path d="M1.5 1.5 h6 l2.5 2.5 v8.5 h-8.5 z" fill="#fff" stroke="#a8a8a8" stroke-width="0.9"/><path d="M4 3.5 h6 l2.5 2.5 v8.5 h-8.5 z" fill="#fff" stroke="#a8a8a8" stroke-width="0.9"/><path d="M6.5 5 h5.5 l3 3 v8 h-8.5 z" fill="#fafafa" stroke="#909090" stroke-width="0.9"/><path d="M12 5 v3 h3" fill="#ddd" stroke="#909090" stroke-width="0.7"/></svg>
<div class="t" style="left:823px;top:122px;">Source files</div>
<div class="abs" style="left:809px;top:139px;width:1px;height:40px;background-image:linear-gradient(#7aa06a 50%,transparent 50%);background-size:1px 2px"></div>
<div class="abs" style="left:810px;top:146px;width:6px;height:1px;background-image:linear-gradient(90deg,#7aa06a 50%,transparent 50%);background-size:2px 1px"></div>
<svg class="abs" style="left:819px;top:138px" width="14" height="16" viewBox="0 0 14 16"><path d="M1.5 0.5 h8 l3 3 v12 h-11 z" fill="#fdfdfd" stroke="#b4b4b4" stroke-width="0.9"/><path d="M9.5 0.5 v3 h3" fill="#e6e6e6" stroke="#b4b4b4" stroke-width="0.7"/><path d="M3.5 4.5 h5 M3.5 6.5 h7 M3.5 8.5 h7 M3.5 10.5 h7 M3.5 12.5 h7" stroke="#a0a0a0" stroke-width="0.8"/></svg>
<div class="t" style="left:838px;top:138px;">../src/main.d</div>
<div class="abs" style="left:810px;top:162px;width:6px;height:1px;background-image:linear-gradient(90deg,#7aa06a 50%,transparent 50%);background-size:2px 1px"></div>
<svg class="abs" style="left:819px;top:154px" width="14" height="16" viewBox="0 0 14 16"><path d="M1.5 0.5 h8 l3 3 v12 h-11 z" fill="#fdfdfd" stroke="#b4b4b4" stroke-width="0.9"/><path d="M9.5 0.5 v3 h3" fill="#e6e6e6" stroke="#b4b4b4" stroke-width="0.7"/><path d="M3.5 4.5 h5 M3.5 6.5 h7 M3.5 8.5 h7 M3.5 10.5 h7 M3.5 12.5 h7" stroke="#a0a0a0" stroke-width="0.8"/></svg>
<div class="t" style="left:838px;top:154px;">../src/bar.d</div>
<div class="abs" style="left:810px;top:178px;width:6px;height:1px;background-image:linear-gradient(90deg,#7aa06a 50%,transparent 50%);background-size:2px 1px"></div>
<svg class="abs" style="left:819px;top:170px" width="14" height="16" viewBox="0 0 14 16"><path d="M1.5 0.5 h8 l3 3 v12 h-11 z" fill="#fdfdfd" stroke="#b4b4b4" stroke-width="0.9"/><path d="M9.5 0.5 v3 h3" fill="#e6e6e6" stroke="#b4b4b4" stroke-width="0.7"/><path d="M3.5 4.5 h5 M3.5 6.5 h7 M3.5 8.5 h7 M3.5 10.5 h7 M3.5 12.5 h7" stroke="#a0a0a0" stroke-width="0.8"/></svg>
<div class="t" style="left:838px;top:170px;">../src/foo.d</div>
<svg class="abs" style="left:801px;top:185px" width="20" height="18" viewBox="0 0 20 18"><path d="M3.6 14.4 L10 8" stroke="#3f72cc" stroke-width="5.4" stroke-linecap="round"/><path d="M3.8 14.2 L10 8" stroke="#79a8ee" stroke-width="3.4" stroke-linecap="round"/><path d="M10.2 8.2 L12.6 5.8" stroke="#c4c4c4" stroke-width="3"/><path d="M17.2 1.6 a3.9 3.9 0 1 0 1.4 4.8 l-3.2 0.5 l-1.2-2.4 z" fill="#d6d6d6" stroke="#8a8a8a" stroke-width="0.8"/></svg>
<div class="t" style="left:823px;top:186px;">Configurations</div>
<div class="abs" style="left:809px;top:203px;width:1px;height:24px;background-image:linear-gradient(#7aa06a 50%,transparent 50%);background-size:1px 2px"></div>
<div class="abs" style="left:810px;top:210px;width:6px;height:1px;background-image:linear-gradient(90deg,#7aa06a 50%,transparent 50%);background-size:2px 1px"></div>
<svg class="abs" style="left:823px;top:206px" width="12" height="12" viewBox="0 0 12 12"><circle cx="6" cy="6" r="4.3" fill="none" stroke="#8e8e8e" stroke-width="2.4" stroke-dasharray="1.7 1.677"/><circle cx="6" cy="6" r="3.2" fill="#d4d4d4" stroke="#8e8e8e" stroke-width="1.3"/><circle cx="6" cy="6" r="1.2" fill="#f4f4f4" stroke="#8a8a8a" stroke-width="0.6"/></svg>
<div class="t" style="left:838px;top:202px;">default (active)</div>
<div class="abs" style="left:810px;top:226px;width:6px;height:1px;background-image:linear-gradient(90deg,#7aa06a 50%,transparent 50%);background-size:2px 1px"></div>
<svg class="abs" style="left:823px;top:222px" width="12" height="12" viewBox="0 0 12 12"><circle cx="6" cy="6" r="4.3" fill="none" stroke="#8e8e8e" stroke-width="2.4" stroke-dasharray="1.7 1.677"/><circle cx="6" cy="6" r="3.2" fill="#d4d4d4" stroke="#8e8e8e" stroke-width="1.3"/><circle cx="6" cy="6" r="1.2" fill="#f4f4f4" stroke="#8a8a8a" stroke-width="0.6"/></svg>
<div class="t" style="left:838px;top:218px;">alternative</div>
<div class="dots" style="left:797px;top:404px;width:122px"></div>
<div class="t" style="left:922px;top:399px;">Project configuration</div>
<div class="dots" style="left:1037px;top:404px;width:121px"></div>
<svg class="abs" style="left:1158px;top:402px" width="10" height="10" viewBox="0 0 10 10"><path d="M1.5 1.5 L8.5 8.5 M8.5 1.5 L1.5 8.5" stroke="#000" stroke-width="2.2" stroke-linecap="butt"/></svg>
<div class="panel" style="left:795px;top:415px;width:374px;height:336px"></div>
<div class="btn" style="left:800px;top:420px;width:274px;height:19px"></div>
<div class="t" style="left:804px;top:421px;">default</div>
<svg class="abs" style="left:1059px;top:427px" width="10" height="7" viewBox="0 0 10 7"><path d="M1 1 L5 5 L9 1" fill="none" stroke="#222" stroke-width="1.5"/></svg>
<div class="btn" style="left:1080px;top:420px;width:24px;height:19px"></div>
<svg class="abs" style="left:1080px;top:420px" width="24" height="19" viewBox="0 0 24 19"><circle cx="11" cy="8.7" r="5.9" fill="none" stroke="#989898" stroke-width="2.6" stroke-dasharray="2.3 2.334"/><circle cx="11" cy="8.7" r="4.4" fill="#c9c7c4" stroke="#9a9a9a" stroke-width="1.6"/><circle cx="11" cy="8.7" r="2" fill="#d6d3d0" stroke="#8e8e8e" stroke-width="0.8"/><circle cx="16.7" cy="12.6" r="3.7" fill="#6ab820"/><rect x="14.399999999999999" y="11.85" width="4.6" height="1.5" fill="#fff"/><rect x="15.95" y="10.3" width="1.5" height="4.6" fill="#fff"/></svg>
<div class="btn" style="left:1110px;top:420px;width:24px;height:19px"></div>
<svg class="abs" style="left:1110px;top:420px" width="24" height="19" viewBox="0 0 24 19"><circle cx="11" cy="8.7" r="5.9" fill="none" stroke="#989898" stroke-width="2.6" stroke-dasharray="2.3 2.334"/><circle cx="11" cy="8.7" r="4.4" fill="#c9c7c4" stroke="#9a9a9a" stroke-width="1.6"/><circle cx="11" cy="8.7" r="2" fill="#d6d3d0" stroke="#8e8e8e" stroke-width="0.8"/><circle cx="16.7" cy="12.6" r="3.7" fill="#e84a3a"/><rect x="14.399999999999999" y="11.85" width="4.6" height="1.5" fill="#fff"/></svg>
<div class="btn" style="left:1140px;top:420px;width:24px;height:19px"></div>
<svg class="abs" style="left:1140px;top:420px" width="24" height="19" viewBox="0 0 24 19"><circle cx="11" cy="8.7" r="5.9" fill="none" stroke="#989898" stroke-width="2.6" stroke-dasharray="2.3 2.334"/><circle cx="11" cy="8.7" r="4.4" fill="#c9c7c4" stroke="#9a9a9a" stroke-width="1.6"/><circle cx="11" cy="8.7" r="2" fill="#d6d3d0" stroke="#8e8e8e" stroke-width="0.8"/><path d="M11.5 10.8 h5 v-2.6 l5 4.4 l-5 4.4 v-2.6 h-5 z" fill="#8cc820" stroke="#5e9e12" stroke-width="0.6"/></svg>
<div class="white" style="left:801px;top:446px;width:105px;height:282px;overflow:hidden"></div>
<div class="abs" style="left:819px;top:479px;width:63px;height:16px;border:1px solid #8cc06c;border-radius:3px;background:linear-gradient(#d6efc4,#b6dc9c)"></div>
<div class="abs" style="left:811px;top:478px;width:1px;height:90px;background-image:linear-gradient(#7aa06a 50%,transparent 50%);background-size:1px 2px"></div>
<div class="t" style="left:807px;top:447px;font-size:12.4px;">General</div>
<div class="t" style="left:807px;top:463px;font-size:12.4px;">Categories</div>
<div class="abs" style="left:812px;top:487px;width:6px;height:1px;background-image:linear-gradient(90deg,#7aa06a 50%,transparent 50%);background-size:2px 1px"></div>
<div class="t" style="left:822px;top:479px;font-size:12.4px;">Messages</div>
<div class="abs" style="left:812px;top:503px;width:6px;height:1px;background-image:linear-gradient(90deg,#7aa06a 50%,transparent 50%);background-size:2px 1px"></div>
<div class="t" style="left:822px;top:495px;font-size:12.4px;">Debuging</div>
<div class="abs" style="left:812px;top:519px;width:6px;height:1px;background-image:linear-gradient(90deg,#7aa06a 50%,transparent 50%);background-size:2px 1px"></div>
<div class="t" style="left:822px;top:511px;font-size:12.4px;width:83px;overflow:hidden">Documentation</div>
<div class="abs" style="left:812px;top:535px;width:6px;height:1px;background-image:linear-gradient(90deg,#7aa06a 50%,transparent 50%);background-size:2px 1px"></div>
<div class="t" style="left:822px;top:527px;font-size:12.4px;">Output</div>
<div class="abs" style="left:812px;top:551px;width:6px;height:1px;background-image:linear-gradient(90deg,#7aa06a 50%,transparent 50%);background-size:2px 1px"></div>
<div class="t" style="left:822px;top:543px;font-size:12.4px;">Others</div>
<div class="abs" style="left:812px;top:567px;width:6px;height:1px;background-image:linear-gradient(90deg,#7aa06a 50%,transparent 50%);background-size:2px 1px"></div>
<div class="t" style="left:822px;top:559px;font-size:12.4px;">Paths</div>
<div class="t" style="left:807px;top:575px;font-size:12.4px;">All categories</div>
<svg class="abs" style="left:800px;top:732px" width="10" height="10" viewBox="0 0 10 10"><path d="M6 1 L2 5 L6 9" fill="none" stroke="#8a8783" stroke-width="1.5"/></svg>
<div class="sbh" style="left:812px;top:731px;width:68px;height:13px"></div>
<svg class="abs" style="left:884px;top:732px" width="10" height="10" viewBox="0 0 10 10"><path d="M6 1 L2 5 L6 9" fill="none" stroke="#8a8783" stroke-width="1.5"/></svg>
<svg class="abs" style="left:896px;top:732px" width="10" height="10" viewBox="0 0 10 10"><path d="M2 1 L6 5 L2 9" fill="none" stroke="#333" stroke-width="1.5"/></svg>
<div class="abs" style="left:913px;top:446px;width:234px;height:300px;background:#cbc8c4;border:1px solid #dad8d5;border-top-color:#bab7b3;border-radius:3px"></div>
<div class="abs" style="left:935px;top:447px;width:1px;height:298px;background:#8e8b87"></div>
<div class="t" style="left:938px;top:451px;font-size:12.45px">additionalWarnings</div>
<div class="t" style="left:1062px;top:451px;font-size:12.45px">True</div>
<div class="abs" style="left:936px;top:471px;width:210px;height:1px;background-image:linear-gradient(90deg,#a09d99 50%,transparent 50%);background-size:2px 1px"></div>
<div class="t" style="left:938px;top:476px;font-size:12.45px">depreciationHandling</div>
<div class="t" style="left:1062px;top:476px;font-size:12.45px">warning</div>
<div class="abs" style="left:936px;top:496px;width:210px;height:1px;background-image:linear-gradient(90deg,#a09d99 50%,transparent 50%);background-size:2px 1px"></div>
<div class="t" style="left:938px;top:501px;font-size:12.45px">quiet</div>
<div class="t" style="left:1062px;top:501px;font-size:12.45px">False</div>
<div class="abs" style="left:936px;top:521px;width:210px;height:1px;background-image:linear-gradient(90deg,#a09d99 50%,transparent 50%);background-size:2px 1px"></div>
<div class="t" style="left:938px;top:526px;font-size:12.45px">tlsInformations</div>
<div class="t" style="left:1062px;top:526px;font-size:12.45px">False</div>
<div class="abs" style="left:936px;top:546px;width:210px;height:1px;background-image:linear-gradient(90deg,#a09d99 50%,transparent 50%);background-size:2px 1px"></div>
<div class="abs" style="left:936px;top:547px;width:121px;height:24px;background:#82ad76"></div>
<div class="t" style="left:938px;top:551px;color:#fff;font-size:12.45px">verbose</div>
<div class="edit" style="left:1061px;top:548px;width:82px;height:23px"></div>
<div class="t" style="left:1066px;top:551px;font-size:12.45px">True</div>
<svg class="abs" style="left:1128px;top:556px" width="10" height="7" viewBox="0 0 10 7"><path d="M1 1 L5 5 L9 1" fill="none" stroke="#222" stroke-width="1.5"/></svg>
<svg class="abs" style="left:917px;top:555px" width="8" height="8" viewBox="0 0 8 8"><path d="M0.3 2.6 h3.2 v-2.4 l4 3.8 l-4 3.8 v-2.4 h-3.2 z" fill="#3a6fd0"/></svg>
<div class="abs" style="left:936px;top:571px;width:210px;height:1px;background-image:linear-gradient(90deg,#a09d99 50%,transparent 50%);background-size:2px 1px"></div>
<div class="t" style="left:938px;top:576px;font-size:12.45px">warnings</div>
<div class="t" style="left:1062px;top:576px;font-size:12.45px">True</div>
<div class="abs" style="left:936px;top:596px;width:210px;height:1px;background-image:linear-gradient(90deg,#a09d99 50%,transparent 50%);background-size:2px 1px"></div>
<div class="abs" style="left:1057px;top:447px;width:1px;height:150px;background:#8e8b87"></div>
<div class="abs" style="left:1058px;top:447px;width:1px;height:150px;background:#fff"></div>
<svg class="abs" style="left:1152px;top:447px" width="10" height="10" viewBox="0 0 10 10"><path d="M1 6 L5 2 L9 6" fill="none" stroke="#8a8783" stroke-width="1.5"/></svg>
<div class="sb" style="left:1150px;top:458px;width:13px;height:264px;background:#c1bdba"></div>
<svg class="abs" style="left:1152px;top:724px" width="10" height="10" viewBox="0 0 10 10"><path d="M1 6 L5 2 L9 6" fill="none" stroke="#8a8783" stroke-width="1.5"/></svg>
<svg class="abs" style="left:1152px;top:736px" width="10" height="10" viewBox="0 0 10 10"><path d="M1 2 L5 6 L9 2" fill="none" stroke="#8a8783" stroke-width="1.5"/></svg>
<div class="abs" style="left:585px;top:73px;width:1px;height:1px;background:#7c7a78;box-shadow:1px -1px 0 #efeeed"></div>
<div class="abs" style="left:145px;top:396px;width:1px;height:1px;background:#7c7a78;box-shadow:1px -1px 0 #efeeed"></div>
<div class="abs" style="left:541px;top:500px;width:1px;height:1px;background:#7c7a78;box-shadow:1px -1px 0 #efeeed"></div>
<div class="abs" style="left:982px;top:396px;width:1px;height:1px;background:#7c7a78;box-shadow:1px -1px 0 #efeeed"></div>
<div class="abs" style="left:910px;top:597px;width:1px;height:1px;background:#7c7a78;box-shadow:1px -1px 0 #efeeed"></div>
<div class="abs" style="left:290px;top:413px;width:1px;height:1px;background:#7c7a78;box-shadow:1px -1px 0 #efeeed"></div>
<div class="abs" style="left:793px;top:409px;width:1px;height:1px;background:#7c7a78;box-shadow:1px -1px 0 #efeeed"></div>
</div>
</body>
</html>
